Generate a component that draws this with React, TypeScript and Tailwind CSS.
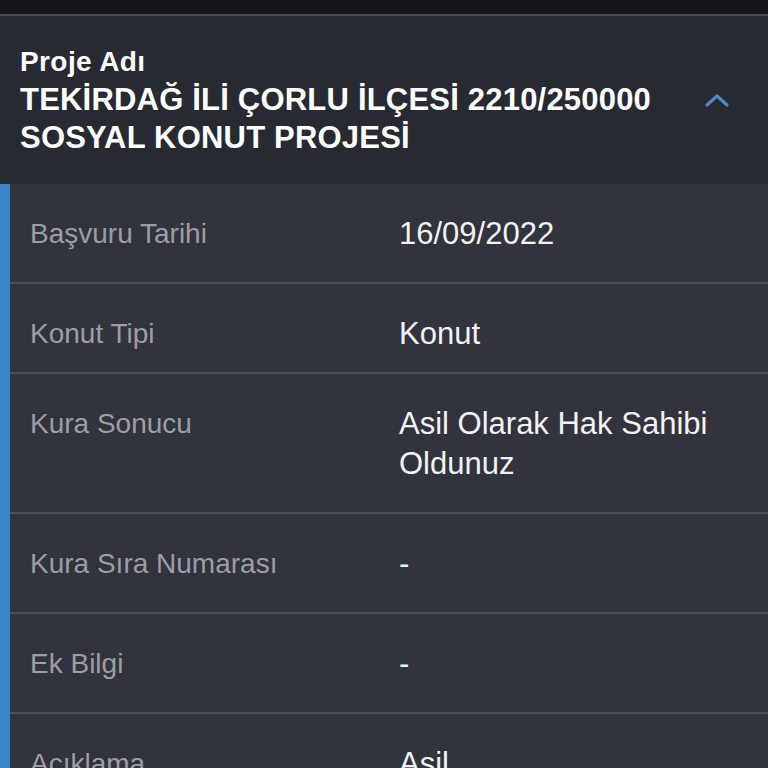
const rows = [
  { label: 'Başvuru Tarihi', value: '16/09/2022', h: 'h-[100px]' },
  { label: 'Konut Tipi', value: 'Konut', h: 'h-[90px]' },
  { label: 'Kura Sonucu', value: 'Asil Olarak Hak Sahibi Oldunuz', h: 'h-[140px]' },
  { label: 'Kura Sıra Numarası', value: '-', h: 'h-[100px]' },
  { label: 'Ek Bilgi', value: '-', h: 'h-[100px]' },
  { label: 'Açıklama', value: 'Asil', h: 'h-[100px]' },
];

export default function App() {
  return (
    <div
      className="h-[768px] w-[768px] overflow-hidden bg-[#31343c]"
      style={{ fontFamily: '"Liberation Sans", Arial, sans-serif' }}
    >
      <div className="h-[14px] bg-[#15171b]" />
      <div className="h-[2px] bg-[#4b4e55]" />

      <div className="flex h-[168px] items-start bg-[#272a31] pl-5 pr-[38px] pt-[30px]">
        <div className="flex-1 text-white">
          <div className="text-[28px] font-bold leading-[32px] tracking-[0.4px]">Proje Adı</div>
          <div className="mt-[3px] text-[31px] font-bold leading-[38px] tracking-[0.2px]">
            TEKİRDAĞ İLİ ÇORLU İLÇESİ 2210/250000
            <br />
            SOSYAL KONUT PROJESİ
          </div>
        </div>
        <svg width="26" height="16" viewBox="0 0 26 16" className="mt-[46px]">
          <path
            d="M3 13 L13 4 L23 13"
            fill="none"
            stroke="#4a88c7"
            strokeWidth="3.2"
            strokeLinecap="round"
            strokeLinejoin="round"
          />
        </svg>
      </div>

      <div className="border-l-[10px] border-[#3a86c8]">
        {rows.map((r) => (
          <div
            key={r.label}
            className={`${r.h} flex border-b-2 border-[#4d5059] pl-5 pr-6 pt-[30px]`}
          >
            <div className="w-[369px] shrink-0 text-[28px] leading-[40px] text-[#9c9ea3]">
              {r.label}
            </div>
            <div className="text-[31px] leading-[40px] text-[#f2f2f2]">{r.value}</div>
          </div>
        ))}
      </div>
    </div>
  );
}
